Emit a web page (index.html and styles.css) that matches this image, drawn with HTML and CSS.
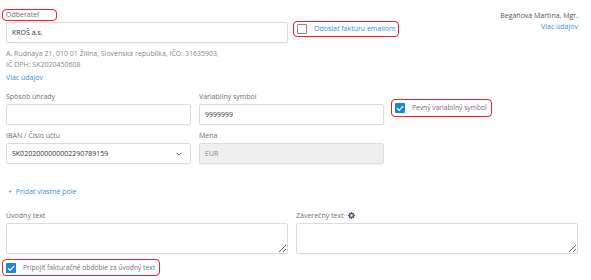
FILE: index.html
```html
<!DOCTYPE html>
<html lang="sk">
  <head>
    <meta charset="UTF-8" />
    <meta name="viewport" content="width=device-width, initial-scale=1.0" />
    <title>Faktúra</title>
    <link rel="stylesheet" href="styles.css">
  </head>
  <body>
    <div class="form">
      <div class="top">
        <div class="col">
          <span class="label mark mark-label">Odberateľ</span>
          <input class="field" type="text" value="KROŠ a.s." />
          <p class="address">
            A. Rudnaya 21, 010 01 Žilina, Slovenská republika, IČO: 31635903,<br />
            IČ DPH: SK2020450608
          </p>
          <a class="link more" href="#">Viac údajov</a>
        </div>
        <div class="col side">
          <label class="check mark email">
            <span class="box"></span>
            <span class="link">Odoslať faktúru emailom</span>
          </label>
          <div class="customer">
            <span>Begáňová Martina, Mgr.</span>
            <a class="link" href="#">Viac údajov</a>
          </div>
        </div>
      </div>

      <div class="grid">
        <div class="group">
          <span class="label">Spôsob úhrady</span>
          <input class="field" type="text" />
        </div>
        <div class="group">
          <span class="label">Variabilný symbol</span>
          <input class="field" type="text" value="9999999" />
        </div>
        <div class="group">
          <label class="check mark fixed">
            <span class="box checked">
              <svg viewBox="0 0 10 10" width="10" height="10"><path d="M2 5.2 L4.2 7.3 L8.2 2.8" fill="none" stroke="#fff" stroke-width="1.2"/></svg>
            </span>
            <span class="small">Pevný variabilný symbol</span>
          </label>
        </div>
        <div class="group">
          <span class="label">IBAN / Číslo účtu</span>
          <div class="field select">
            <span>SK0202000000002290789159</span>
            <svg viewBox="0 0 8 5" width="6" height="4"><path d="M1 1 L4 4 L7 1" fill="none" stroke="#555" stroke-width="1.3"/></svg>
          </div>
        </div>
        <div class="group">
          <span class="label">Mena</span>
          <input class="field" type="text" value="EUR" disabled />
        </div>
      </div>

      <a class="link add" href="#"><span class="plus">+</span> Pridať vlastné pole</a>

      <div class="texts">
        <div class="group">
          <span class="label">Úvodný text</span>
          <textarea class="field area"></textarea>
        </div>
        <div class="group">
          <span class="label">Záverečný text
            <svg class="gear" viewBox="0 0 16 16" width="7" height="7"><path fill="#4a5a6e" d="M6.8 0h2.4l.4 2.2 1.3.6 1.9-1.3 1.7 1.7-1.3 1.9.6 1.3 2.2.4v2.4l-2.2.4-.6 1.3 1.3 1.9-1.7 1.7-1.9-1.3-1.3.6-.4 2.2H6.8l-.4-2.2-1.3-.6-1.9 1.3-1.7-1.7 1.3-1.9-.6-1.3L0 9.2V6.8l2.2-.4.6-1.3-1.3-1.9 1.7-1.7 1.900 1.3 1.3-.6zM8 5.3a2.7 2.7 0 1 0 0 5.4 2.7 2.7 0 0 0 0-5.4z"/></svg>
          </span>
          <textarea class="field area"></textarea>
        </div>
      </div>

      <label class="check mark period">
        <span class="box checked">
          <svg viewBox="0 0 10 10" width="10" height="10"><path d="M2 5.2 L4.2 7.3 L8.2 2.8" fill="none" stroke="#fff" stroke-width="1.2"/></svg>
        </span>
        <span class="small">Pripojiť fakturačné obdobie za úvodný text</span>
      </label>
    </div>
  </body>
</html>
```

FILE: styles.css
```css
body {
  margin: 0;
  background: #fff;
  font-family: "Open Sans", Arial, sans-serif;
  font-size: 7px;
  line-height: 10px;
  color: #333;
}
.form {
  padding: 10px 13px 0 6px;
}
.label {
  display: block;
  color: #707070;
  margin-bottom: 2px;
}
.link {
  color: #2f8fd8;
  text-decoration: none;
}
.mark {
  outline: 1.7px solid #e3262c;
  border-radius: 3px;
  box-shadow: 0 0 2px rgba(227, 38, 44, 0.4);
}
.mark-label {
  display: inline-block;
  margin-left: -3px;
  padding-left: 3px;
  width: 50px;
  margin-bottom: 2px;
}
.field {
  box-sizing: border-box;
  width: 100%;
  height: 21px;
  margin: 0;
  padding: 0 5px;
  border: 1px solid #dcdcdc;
  border-radius: 2px;
  font-family: inherit;
  font-size: 7px;
  color: #333;
  background: #fff;
  box-shadow: 0 1px 1px rgba(0, 0, 0, 0.04);
}
.field:disabled {
  background: #efefef;
  color: #888;
}
.top {
  display: grid;
  grid-template-columns: 282px 282px;
  gap: 8px;
}
.col {
  display: flex;
  flex-direction: column;
  align-items: flex-start;
}
.address {
  margin: 5px 0 0;
  color: #888;
  line-height: 11px;
}
.more {
  margin-top: 3px;
}
.side {
  flex-direction: row;
  justify-content: space-between;
}
.check {
  display: flex;
  align-items: center;
  gap: 7px;
  color: #707070;
}
.small {
  font-size: 6.7px;
}
.box {
  box-sizing: border-box;
  width: 10px;
  height: 10px;
  border: 1px solid #8a8a8a;
  border-radius: 1px;
  background: #fff;
  display: flex;
}
.box.checked {
  border: none;
  background: #1a86d6;
}
.email {
  align-self: flex-start;
  margin-top: 12px;
  padding: 2px 3px 2px 3px;
  margin-left: -2px;
}
.customer {
  display: flex;
  flex-direction: column;
  align-items: flex-end;
  color: #555;
  line-height: 11px;
}
.grid {
  display: grid;
  grid-template-columns: 185px 185px 185px;
  column-gap: 8px;
  row-gap: 6px;
  margin-top: 9px;
}
.group {
  display: flex;
  flex-direction: column;
  align-items: flex-start;
}
.fixed {
  margin-top: 8px;
  margin-left: 0;
  padding: 3px 4px 3px 3px;
}
.select {
  display: flex;
  align-items: center;
  justify-content: space-between;
  padding-right: 8px;
}
.add {
  display: inline-block;
  margin: 23px 0 0 2px;
}
.plus {
  margin-right: 2px;
}
.texts {
  display: grid;
  grid-template-columns: 282px 282px;
  gap: 8px;
  margin-top: 14px;
}
.area {
  height: 31px;
  resize: vertical;
}
.gear {
  margin-left: 2px;
  vertical-align: -1px;
}
.period {
  display: inline-flex;
  margin: 6px 0 0 -3px;
  padding: 3px 4px 2px 3px;
}
```
